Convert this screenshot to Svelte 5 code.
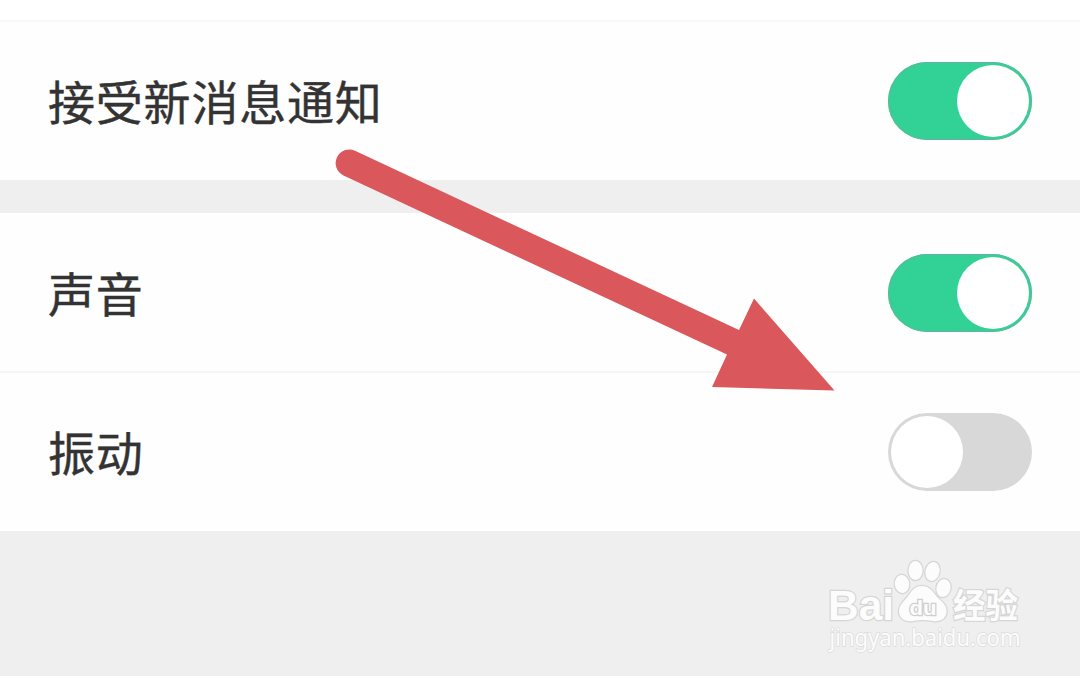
<script>
  let groups = $state([
    [{ id: "notify", label: "接受新消息通知", on: true }],
    [
      { id: "sound", label: "声音", on: true },
      { id: "vibrate", label: "振动", on: false },
    ],
  ]);
</script>

<main class="settings">
  <div class="settings__top"></div>

  {#each groups as group}
    <section class="group">
      {#each group as item (item.id)}
        <div class="row">
          <span class="row__label">{item.label}</span>
          <button
            class="switch"
            class:on={item.on}
            role="switch"
            aria-checked={item.on}
            aria-label={item.label}
            onclick={() => (item.on = !item.on)}
          >
            <span class="switch__knob"></span>
          </button>
        </div>
      {/each}
    </section>
  {/each}

  <svg class="arrow" width="504" height="246" viewBox="333 147 504 246">
    <path
      d="M355 150.8 L739 330 L754 298.5 L834.5 390.5 L712 387 L727 354.5 L343.5 175.5 A13.6 13.6 0 0 1 355 150.8 Z"
    />
  </svg>

  <svg class="watermark" width="220" height="116" viewBox="820 555 220 116">
    <g class="watermark__logo">
      <text class="latin" x="828" y="620" textLength="66" lengthAdjust="spacingAndGlyphs">Bai</text>
      <ellipse cx="902" cy="584" rx="7.2" ry="9" transform="rotate(-8 902 584)" />
      <ellipse cx="915.5" cy="570.5" rx="7" ry="9.5" />
      <ellipse cx="932.5" cy="571.5" rx="7" ry="9.5" transform="rotate(14 932.5 571.5)" />
      <ellipse cx="943.5" cy="588" rx="7" ry="9" transform="rotate(12 943.5 588)" />
      <path
        d="M922 586 C930 586 933 592 937 597 C942 602 947 605 946.5 612 C946 619 940 622 933 621 C926 619.5 920 619.5 913 621 C905 622.5 899 618 899 611 C899 604 905 601 909 595 C912 590 915 586 922 586 Z"
      />
      <text class="hanzi" x="953" y="617.5" textLength="65" lengthAdjust="spacingAndGlyphs">经验</text>
    </g>
    <text class="du" x="909.5" y="615" textLength="27" lengthAdjust="spacingAndGlyphs">du</text>
    <text class="url" x="829.5" y="646" textLength="191" lengthAdjust="spacingAndGlyphs">jingyan.baidu.com</text>
  </svg>
</main>

<style>
:global(body) {
  margin: 0;
  background: #efefef;
}

.settings {
  position: relative;
  height: 676px;
  overflow: hidden;
  background: #efefef;
  font-family: "Noto Sans CJK SC", sans-serif;
}

.settings__top {
  height: 20px;
  border-bottom: 2px solid #f7f7f7;
  background: #fff;
}

.group {
  margin-bottom: 33px;
  background: #fefefe;
}

.row {
  display: flex;
  align-items: center;
  justify-content: space-between;
  box-sizing: border-box;
  height: 158px;
  padding: 0 48px;
}

.group + .group .row:first-child {
  padding-top: 2px;
}

.row + .row {
  height: 160px;
  border-top: 2px solid #f5f5f5;
}

.row__label {
  padding-bottom: 2px;
  color: #333;
  font-size: 47px;
  line-height: 72px;
  letter-spacing: 0.8px;
  -webkit-text-stroke: 0.4px #333;
}

.switch {
  display: flex;
  box-sizing: border-box;
  width: 144px;
  height: 78px;
  margin: 0;
  padding: 3px;
  border: none;
  border-radius: 39px;
  background: #d8d8d8;
  cursor: pointer;
}

.switch.on {
  justify-content: flex-end;
  background: #32d296;
  box-shadow: inset 0 0 0 2px #4cc299;
}

.switch__knob {
  width: 72px;
  height: 72px;
  border-radius: 50%;
  background: #fff;
}

.arrow {
  position: absolute;
  top: 147px;
  left: 333px;
  fill: #da575c;
  pointer-events: none;
}

.watermark {
  position: absolute;
  top: 555px;
  left: 820px;
  pointer-events: none;
}

.watermark__logo {
  fill: #fcfcfc;
  stroke: #d6d6d6;
  stroke-width: 2.5px;
  paint-order: stroke;
}

.latin {
  font: bold 43px "Liberation Sans", sans-serif;
}

.hanzi {
  font: bold 34px "Noto Sans CJK SC", sans-serif;
}

.du {
  fill: #fcfcfc;
  stroke: #cfcfcf;
  stroke-width: 2.5px;
  paint-order: stroke;
  font: bold 20px "Liberation Sans", sans-serif;
}

.url {
  fill: #fcfcfc;
  stroke: #dcdcdc;
  stroke-width: 1.5px;
  paint-order: stroke;
  font: 23px "Noto Sans", sans-serif;
}
</style>
